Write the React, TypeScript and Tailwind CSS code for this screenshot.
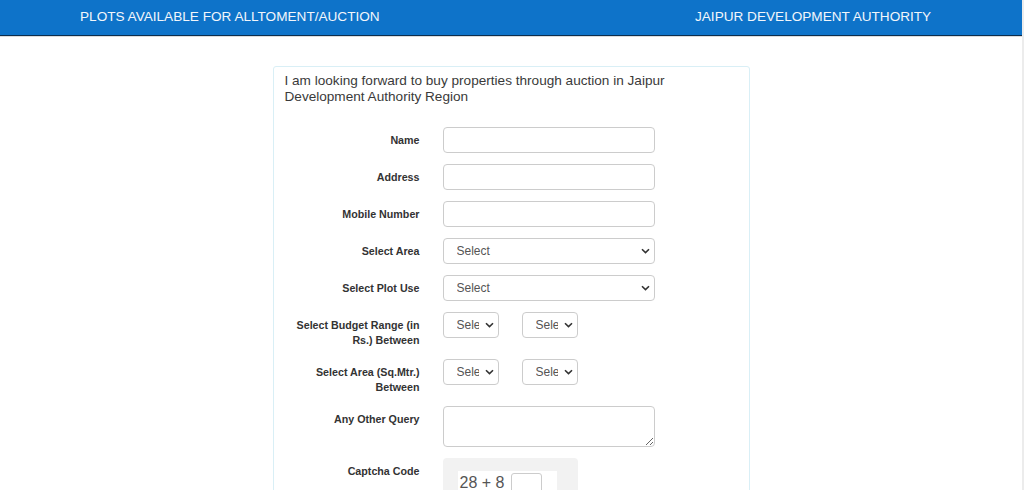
import React from "react";

const labelCls =
  "w-[135px] shrink-0 pt-[6px] text-right text-[10.7px] font-bold leading-[15px] text-[#333]";

const inputCls =
  "h-[26px] w-[212px] rounded-[4px] border border-[#cccccc] bg-white px-[12px] text-[12px] text-[#555] outline-none";

const Chevron = () => (
  <svg
    className="pointer-events-none absolute right-[5px] top-1/2 -translate-y-1/2"
    width="9"
    height="6"
    viewBox="0 0 9 6"
    fill="none"
  >
    <path d="M1 1.2 4.5 4.6 8 1.2" stroke="#333" strokeWidth="1.6" />
  </svg>
);

const SelectBox = ({ width }: { width: string }) => (
  <div className={`relative ${width}`}>
    <select className="h-[26px] w-full appearance-none overflow-hidden rounded-[4px] border border-[#cccccc] bg-white pl-[13px] pr-[19px] text-[12px] text-[#555] outline-none">
      <option>Select</option>
    </select>
    <Chevron />
  </div>
);

const Row = ({
  label,
  children,
}: {
  label: React.ReactNode;
  children: React.ReactNode;
}) => (
  <div className="mb-[11px] flex gap-[23px]">
    <label className={labelCls}>{label}</label>
    <div>{children}</div>
  </div>
);

const App = () => {
  return (
    <div
      className="flex min-h-[490px] w-full bg-white"
      style={{ fontFamily: '"Liberation Sans", Arial, sans-serif' }}
    >
      <div className="flex-1">
        <header className="border-b border-[#0b2d4d] bg-[#0e73c9]">
          <div className="flex h-[35px] items-center text-[13.6px] text-[#f2f6fb]">
            <div className="w-[695px] pl-[80px]">
              PLOTS AVAILABLE FOR ALLTOMENT/AUCTION
            </div>
            <div>JAIPUR DEVELOPMENT AUTHORITY</div>
          </div>
        </header>
        <div className="h-[1px] bg-[#dcdcdc]" />

        <div className="flex justify-center pt-[29px]">
          <div className="w-[477px] rounded-[3px] border border-[#d9eff6] px-[11px] pt-[6px] pb-[20px]">
            <p className="w-[445px] text-[13.6px] leading-[16px] text-[#3a3a3a]">
              I am looking forward to buy properties through auction in Jaipur
              Development Authority Region
            </p>

            <div className="mt-[22px]">
              <Row label="Name">
                <input className={inputCls} />
              </Row>
              <Row label="Address">
                <input className={inputCls} />
              </Row>
              <Row label="Mobile Number">
                <input className={inputCls} />
              </Row>
              <Row label="Select Area">
                <SelectBox width="w-[212px]" />
              </Row>
              <Row label="Select Plot Use">
                <SelectBox width="w-[212px]" />
              </Row>
              <Row label="Select Budget Range (in Rs.) Between">
                <div className="flex gap-[23px]">
                  <SelectBox width="w-[56px]" />
                  <SelectBox width="w-[56px]" />
                </div>
              </Row>
              <Row label="Select Area (Sq.Mtr.) Between">
                <div className="flex gap-[23px]">
                  <SelectBox width="w-[56px]" />
                  <SelectBox width="w-[56px]" />
                </div>
              </Row>
              <Row label="Any Other Query">
                <textarea className="block h-[41px] w-[212px] rounded-[4px] border border-[#cccccc] bg-white px-[12px] text-[12px] outline-none" />
              </Row>
              <Row label="Captcha Code">
                <div className="h-[60px] w-[135px] rounded-[4px] bg-[#f2f2f2] pl-[15px] pt-[13px]">
                  <div className="flex h-[40px] w-[99px] items-start gap-[7px] bg-white pl-[2px] pt-[2px]">
                    <span className="text-[16px] leading-[20px] text-[#555]">
                      28 + 8
                    </span>
                    <input className="h-[26px] w-[31px] rounded-[3px] border border-[#cccccc] bg-white" />
                  </div>
                </div>
              </Row>
            </div>
          </div>
        </div>
      </div>
      <div className="w-[2px] bg-[#ececec]" />
    </div>
  );
};

export default App;
